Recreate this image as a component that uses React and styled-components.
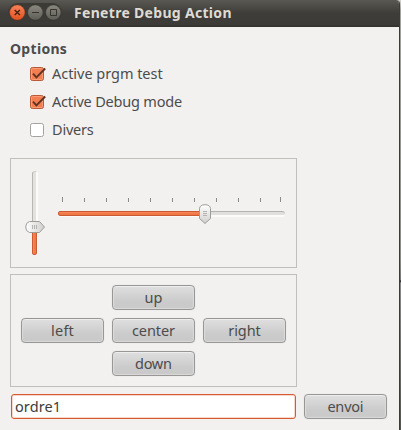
import React from "react";
import styled, { createGlobalStyle } from "styled-components";

const GlobalStyle = createGlobalStyle`
  * { box-sizing: border-box; }
  html, body { margin: 0; padding: 0; overflow: hidden; }
  body { font-family: "Noto Sans", "Open Sans", sans-serif; font-size: 14.5px; color: #4c4c4c; }
`;

const Desktop = styled.div`
  width: 401px;
  height: 430px;
  background: linear-gradient(#d6d4cf 0, #a3a39e 10px, #8b8b85 260px, #777 280px, #16181a 281px, #8a8a8a 283px, #55554f 430px);
`;

const Window = styled.main`
  display: flex;
  flex-direction: column;
  width: 400px;
  height: 430px;
  background: #f2f1f0;
  border-right: 1px solid #3c3b37;
  border-radius: 0 4px 0 0;
  overflow: hidden;
`;

const TitleBar = styled.header`
  display: flex;
  align-items: flex-start;
  flex: none;
  height: 27px;
  padding: 3px 0 0 8px;
  background: linear-gradient(#595852 0, #3e3d39 13px, #3c3b37 25px, #33322e 26px);
`;

const WindowControls = styled.div`
  display: flex;
  gap: 2px;
  height: 19px;
  padding: 1px;
  border-radius: 10px;
  background: linear-gradient(#3c3b36, #3b3a36);
`;

const ControlIcon = styled.svg`
  display: block;
  width: 16px;
  height: 17px;
`;

const Spaced = styled.span`
  letter-spacing: ${(p) => p.$track || 0}px;
  margin-right: ${(p) => -(p.$track || 0)}px;
  white-space: pre;
`;

const Title = styled.h1`
  margin: 0 0 0 12px;
  font-size: 14px;
  font-weight: 700;
  line-height: 20px;
  color: #dfdbd2;
`;

const Content = styled.div`
  display: flex;
  flex-direction: column;
  padding: 12px 0 0 10px;
`;

const SectionTitle = styled.h2`
  margin: 0;
  font-size: 14px;
  font-weight: 700;
  line-height: 20px;
  height: 21px;
`;

const OptionRow = styled.label`
  display: flex;
  align-items: center;
  height: 28px;
  padding-left: 19px;
  gap: 5px;
  line-height: 20px;
`;

const OptionText = styled(Spaced)`
  padding-bottom: 2px;
`;

const CheckSvg = styled.svg`
  display: block;
  flex: none;
  width: 18px;
  height: 18px;
`;

const Frame = styled.section`
  width: 287px;
  border: 1px solid #c0bfbc;
`;

const SliderFrame = styled(Frame)`
  display: flex;
  height: 110px;
  margin-top: 14px;
  padding: 12px 0 0 14px;
`;

const VerticalScale = styled.div`
  position: relative;
  width: 20px;
  height: 84px;
  padding-left: 7px;
`;

const VerticalTrough = styled.div`
  display: flex;
  align-items: flex-end;
  width: 6px;
  height: 84px;
  border-left: 1px solid #b9b5b1;
  border-top: 1px solid #d0cecb;
  border-right: 2px solid #fbfbfa;
  border-radius: 3px;
  background: #e3e2e0;
`;

const VerticalFill = styled.div`
  flex: none;
  width: 5px;
  height: 27px;
  margin: 0 0 0 -1px;
  border: 1px solid #ca5a31;
  border-radius: 0 0 2px 2px;
  background: linear-gradient(90deg, #f98b62, #f07746 60%);
`;

const VerticalKnob = styled.svg`
  position: absolute;
  left: 0;
  top: 49px;
  width: 21px;
  height: 14px;
`;

const HorizontalScale = styled.div`
  position: relative;
  width: 228px;
  margin: 26px 0 0 13px;
`;

const Ticks = styled.div`
  display: grid;
  grid-template-columns: repeat(9, 22px) 20px 1px;
  align-items: end;
  height: 5px;
  margin-left: 4px;
`;

const Tick = styled.i`
  width: 1px;
  height: ${(p) => (p.$end ? 5 : 4)}px;
  background: #8d8b88;
`;

const HorizontalTrough = styled.div`
  width: 227px;
  height: 6px;
  margin-top: 9px;
  border-top: 1px solid #b4b2af;
  border-bottom: 2px solid #fbfbfa;
  border-radius: 3px;
  background: #e0dfdd;
`;

const HorizontalFill = styled.div`
  width: 147px;
  height: 5px;
  margin-top: -1px;
  border: 1px solid #ca5a31;
  border-radius: 2px 0 0 2px;
  background: linear-gradient(#f98b62, #f07746 60%);
`;

const HorizontalKnob = styled.svg`
  position: absolute;
  left: 141px;
  top: 7px;
  width: 12px;
  height: 21px;
`;

const PadFrame = styled(Frame)`
  display: grid;
  grid-template-columns: repeat(3, 83px);
  grid-template-rows: repeat(3, 25px);
  gap: 8px;
  height: 113px;
  margin-top: 6px;
  padding: 10px;
`;

const PushButton = styled.button`
  display: flex;
  align-items: center;
  justify-content: center;
  width: 83px;
  height: 25px;
  padding: 0 0 1px;
  font: inherit;
  line-height: 20px;
  color: #4c4c4c;
  border: 1px solid #989795;
  border-radius: 4px;
  background: linear-gradient(#dfdfdf, #cbcbcb 65%, #c9c9c9);
  box-shadow: inset 0 1px 0 #ededed, inset 1px 0 1px #dcdcdc, inset -1px 0 1px #dcdcdc, inset 0 -1px 1px #d8d8d8, 0 0 1px 0 #d4d3d1;
  grid-column: ${(p) => p.$col || "auto"};
  grid-row: ${(p) => p.$row || "auto"};
`;

const CommandBar = styled.form`
  display: flex;
  gap: 8px;
  margin: 7px 0 0 1px;
`;

const Entry = styled.input`
  width: 285px;
  height: 25px;
  padding: 0 0 1px 3px;
  font: inherit;
  letter-spacing: 0.1px;
  color: #3c3c3c;
  border: 1px solid #d45a30;
  border-radius: 3px;
  outline: none;
  background: #fff;
  box-shadow: inset 0 0 0 1px #f8d8cb;
`;

function Control({ kind }) {
  const close = kind === "close";
  const id = `fill-${kind}`;
  return (
    <ControlIcon viewBox="0 0 16 17">
      <defs>
        <linearGradient id={id} x1="0" y1="0" x2="0" y2="1">
          <stop offset="0" stopColor={close ? "#f7825a" : "#8b8980"} />
          <stop offset="1" stopColor={close ? "#e4521e" : "#5e5d56"} />
        </linearGradient>
      </defs>
      <circle cx="8.3" cy="8.5" r="7.6" fill={`url(#${id})`} stroke={close ? "#9a3d1b" : "#35342f"} strokeWidth="0.4" />
      {close && <path d="M5.7 5.9 10.9 11.1M10.9 5.9 5.7 11.1" stroke="#46220f" strokeWidth="1.4" />}
      {kind === "minimize" && <path d="M5 8.5H12" stroke="#35342f" strokeWidth="1" />}
      {kind === "maximize" && <path d="M5.5 5.5H11.5V11.5H5.5Z" fill="none" stroke="#35342f" strokeWidth="1" />}
    </ControlIcon>
  );
}

function CheckMark({ checked }) {
  return (
    <CheckSvg viewBox="0 0 18 18">
      <rect x="1.5" y="2.5" width="13" height="13" rx="2" fill={checked ? "#f37e51" : "#fff"} stroke={checked ? "#b65a37" : "#a5a3a0"} />
      {checked && (
        <>
          <rect x="2.5" y="3.5" width="11" height="11" rx="1" fill="none" stroke="#f99b75" />
          <path d="M4 8.6 7.4 12.3 16.2 3.5" fill="none" stroke="#623322" strokeWidth="1.9" />
        </>
      )}
    </CheckSvg>
  );
}

function Option({ checked, track, children }) {
  return (
    <OptionRow>
      <CheckMark checked={checked} />
      <OptionText $track={track}>{children}</OptionText>
    </OptionRow>
  );
}

const pad = [
  { label: "up", col: 2, row: 1, track: 0 },
  { label: "left", col: 1, row: 2, track: 0.2 },
  { label: "center", col: 2, row: 2, track: -0.1 },
  { label: "right", col: 3, row: 2, track: -0.1 },
  { label: "down", col: 2, row: 3, track: -0.3 },
];

export default function App() {
  return (
    <>
      <GlobalStyle />
      <Desktop>
        <Window>
          <TitleBar>
            <WindowControls>
              <Control kind="close" />
              <Control kind="minimize" />
              <Control kind="maximize" />
            </WindowControls>
            <Title><Spaced $track={0.31}>Fenetre Debug Action</Spaced></Title>
          </TitleBar>
          <Content>
            <SectionTitle><Spaced $track={0.3}>Options</Spaced></SectionTitle>
            <Option checked track={-0.03}>Active prgm test</Option>
            <Option checked track={-0.19}>Active Debug mode</Option>
            <Option track={-0.2}>Divers</Option>
            <SliderFrame>
              <VerticalScale>
                <VerticalTrough><VerticalFill /></VerticalTrough>
                <VerticalKnob viewBox="0 0 21 14">
                  <defs>
                    <linearGradient id="vknob">
                      <stop offset="0" stopColor="#fff" />
                      <stop offset="1" stopColor="#cfcecc" />
                    </linearGradient>
                  </defs>
                  <path d="M4.5 1.5H14.5L19.5 7 14.5 12.5H4.5Q.7 11.5.7 7T4.5 1.5Z" fill="url(#vknob)" stroke="#9e9c99" />
                  <path d="M7.5 5V9M9.5 5V9M11.5 5V9" stroke="#b5b3b1" />
                </VerticalKnob>
              </VerticalScale>
              <HorizontalScale>
                <Ticks>
                  {Array.from({ length: 11 }, (_, i) => <Tick key={i} $end={i === 0 || i === 10} />)}
                </Ticks>
                <HorizontalTrough><HorizontalFill /></HorizontalTrough>
                <HorizontalKnob viewBox="0 0 12 21">
                  <defs>
                    <linearGradient id="hknob" x1="0" y1="0" x2="0" y2="1">
                      <stop offset="0" stopColor="#fff" />
                      <stop offset="1" stopColor="#cfcecc" />
                    </linearGradient>
                  </defs>
                  <path d="M.5 4.5Q1 .7 6 .7T11.5 4.5V14.5L6 19.5.5 14.5Z" fill="url(#hknob)" stroke="#9e9c99" />
                  <path d="M4 7.5H8M4 9.5H8M4 11.5H8" stroke="#b5b3b1" />
                </HorizontalKnob>
              </HorizontalScale>
            </SliderFrame>
            <PadFrame>
              {pad.map((b) => (
                <PushButton key={b.label} $col={b.col} $row={b.row}>
                  <Spaced $track={b.track}>{b.label}</Spaced>
                </PushButton>
              ))}
            </PadFrame>
            <CommandBar onSubmit={(e) => e.preventDefault()}>
              <Entry defaultValue="ordre1" />
              <PushButton><Spaced $track={-0.2}>envoi</Spaced></PushButton>
            </CommandBar>
          </Content>
        </Window>
      </Desktop>
    </>
  );
}
